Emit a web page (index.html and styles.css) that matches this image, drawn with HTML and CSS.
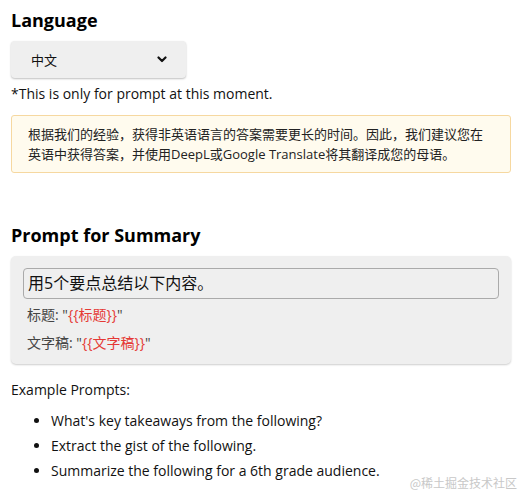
FILE: index.html
```html
<!DOCTYPE html>
<html lang="zh">
  <head>
    <meta charset="UTF-8" />
    <title>Prompt Settings</title>
    <link rel="stylesheet" href="styles.css">
  </head>
  <body>
    <div class="container">
      <h2>Language</h2>
      <div class="select">
        <span>中文</span>
        <svg class="chevron" width="10" height="7" viewBox="0 0 10 7">
          <path d="M1.5 1.5 L5 5 L8.5 1.5" fill="none" stroke="#111" stroke-width="2.2" stroke-linecap="round" stroke-linejoin="round" />
        </svg>
      </div>
      <p class="note">*This is only for prompt at this moment.</p>
      <div class="alert">
        根据我们的经验，获得非英语语言的答案需要更长的时间。因此，我们建议您在英语中获得答案，并使用DeepL或Google Translate将其翻译成您的母语。
      </div>

      <h2 class="section">Prompt for Summary</h2>
      <div class="card">
        <div class="input">用5个要点总结以下内容。</div>
        <p class="field">标题: "<span class="var">{{标题}}</span>"</p>
        <p class="field">文字稿: "<span class="var">{{文字稿}}</span>"</p>
      </div>

      <p class="examples-title">Example Prompts:</p>
      <ul class="examples">
        <li>What's key takeaways from the following?</li>
        <li>Extract the gist of the following.</li>
        <li>Summarize the following for a 6th grade audience.</li>
      </ul>
    </div>
    <div class="watermark">@稀土掘金技术社区</div>
  </body>
</html>
```

FILE: styles.css
```css
body {
  font-family: "Open Sans", "Noto Sans CJK SC", sans-serif;
  font-size: 14px;
  color: #111;
  margin: 0;
  padding: 0;
}

.container {
  padding: 8px 11px 0 11px;
}

h2 {
  font-size: 18px;
  font-weight: bold;
  line-height: 24px;
  margin: 0;
  color: #000;
}

.select {
  display: flex;
  align-items: center;
  justify-content: space-between;
  width: 175px;
  height: 37px;
  box-sizing: border-box;
  margin-top: 9px;
  padding: 0 19px 0 20px;
  background: #efefef;
  border-radius: 4px;
  box-shadow: 0 1px 2px rgba(0, 0, 0, 0.25);
  font-size: 13px;
}

.note {
  margin: 6px 0 0 0;
  line-height: 20px;
}

.alert {
  margin-top: 11px;
  padding: 8px 16px;
  border: 1px solid #f6d8a0;
  border-radius: 3px;
  background: #fffbee;
  font-size: 13px;
  line-height: 20px;
  color: #222;
}

.section {
  margin-top: 50px;
}

.card {
  margin-top: 9px;
  padding: 12px 12px 7px 12px;
  background: #efefef;
  border-radius: 5px;
  box-shadow: 0 1px 2px rgba(0, 0, 0, 0.2);
}

.input {
  height: 31px;
  box-sizing: border-box;
  padding: 0 4px;
  border: 1px solid #aaa;
  border-radius: 4px;
  font-size: 16px;
  line-height: 29px;
  color: #111;
}

.field {
  margin: 0;
  padding-left: 4px;
  line-height: 28px;
  color: #444;
}

.field:first-of-type {
  margin-top: 2px;
}

.var {
  color: #e53935;
}

.examples-title {
  margin: 14px 0 0 0;
  line-height: 24px;
}

.examples {
  margin: 6px 0 0 0;
  padding-left: 40px;
}

.examples li {
  line-height: 25px;
}

.watermark {
  position: absolute;
  right: 5px;
  bottom: 3px;
  font-size: 12px;
  color: #c8c8c8;
  font-family: "Noto Sans CJK SC", sans-serif;
}
```
